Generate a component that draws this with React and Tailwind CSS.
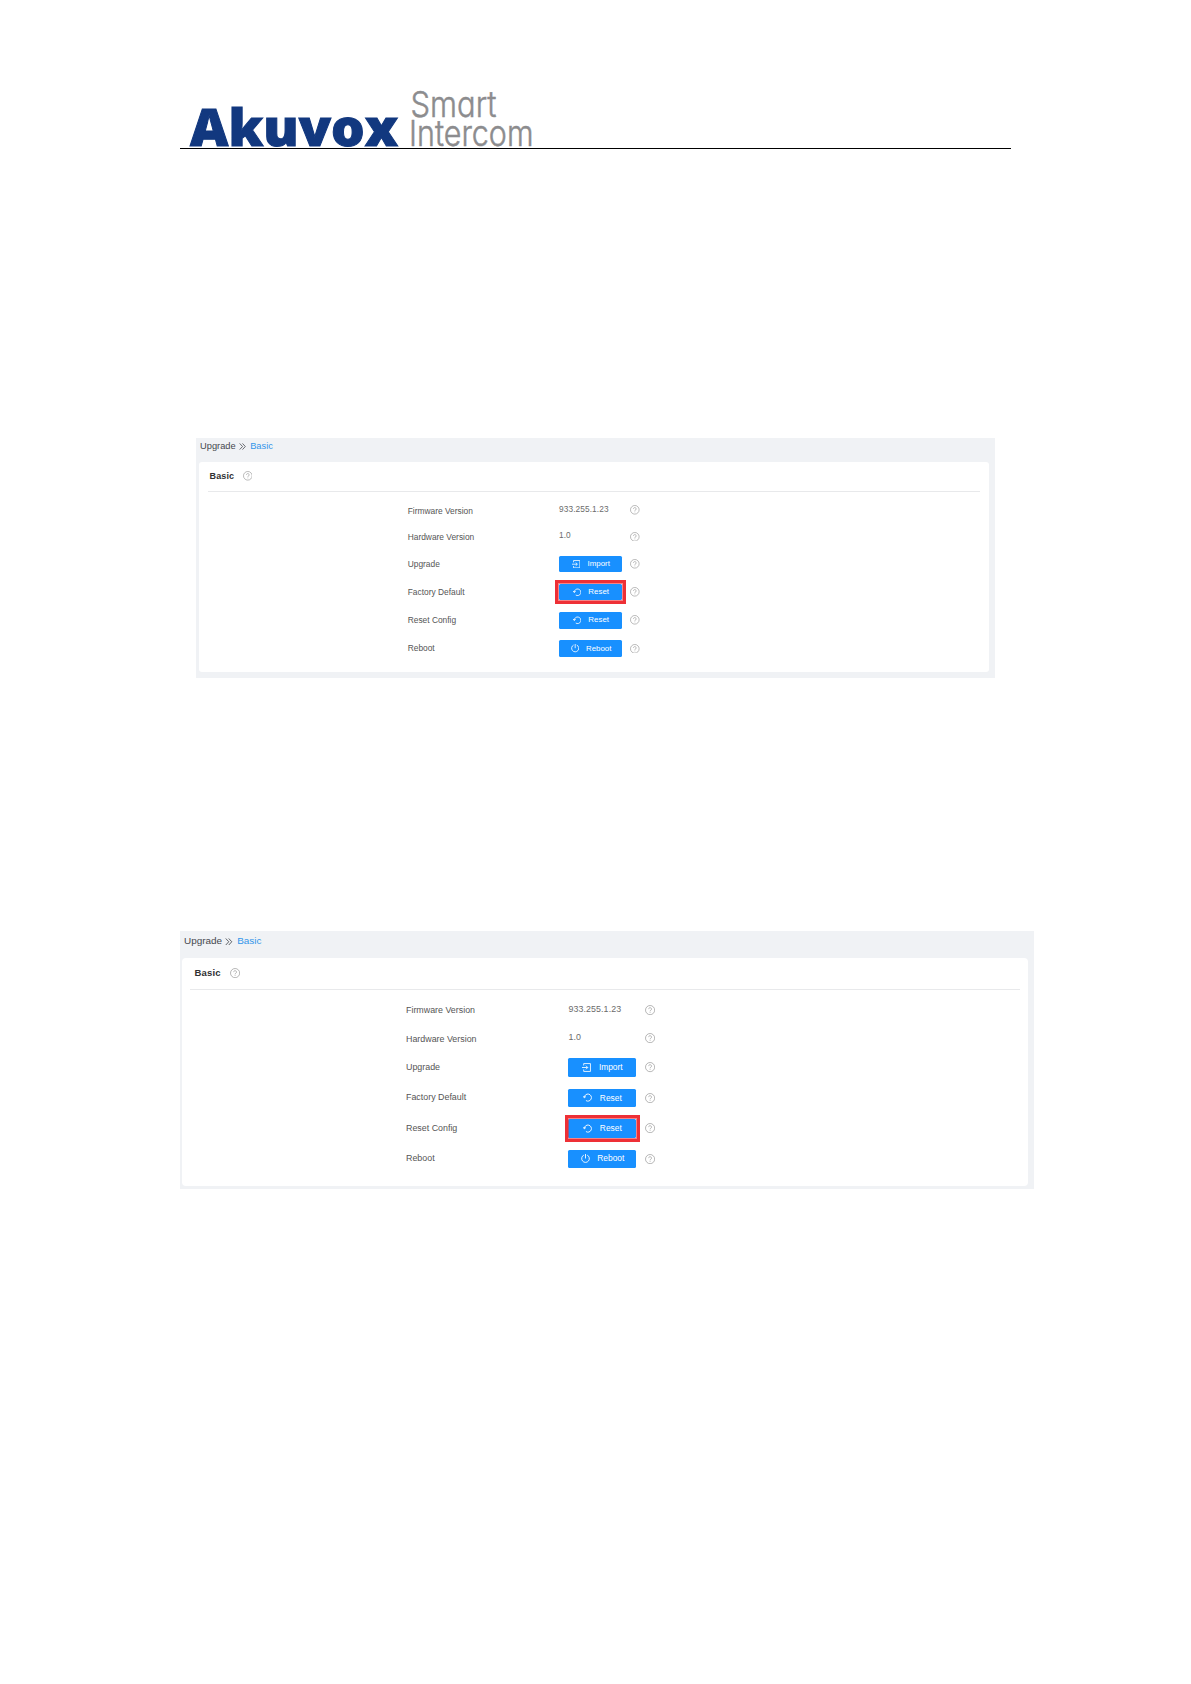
const VALUES = { firmware: "933.255.1.23", hardware: "1.0" };

const ROWS = [
    { id: "firmware", label: "Firmware Version" },
    { id: "hardware", label: "Hardware Version" },
    { id: "upgrade", label: "Upgrade", action: "Import", icon: ImportIcon },
    { id: "factory", label: "Factory Default", action: "Reset", icon: ResetIcon },
    { id: "config", label: "Reset Config", action: "Reset", icon: ResetIcon },
    { id: "reboot", label: "Reboot", action: "Reboot", icon: RebootIcon },
];

const SMALL = {
    panel: "ml-[196px] w-[799px] h-[239.5px]",
    crumbs: "h-6 pl-[4px] pb-[7px] text-[9.3px]",
    chevrons: "ml-[3px] mr-[4.5px] h-[7px] w-[7px]",
    card: "ml-[2.5px] w-[790.5px] h-[210px] rounded-[3px]",
    head: "ml-[9px] mr-[9px] h-[29.5px] pl-[2px] text-[9px] tracking-[0.15px]",
    headHelp: "ml-[8.5px]",
    rows: "pt-[5.5px] pl-[209.2px]",
    textRow: "h-[26.4px]",
    actionRow: "h-[28.2px]",
    label: "w-[151.3px] text-[8.4px]",
    textLabel: "pt-[2px]",
    field: "w-[71.3px]",
    value: "text-[8.3px] tracking-[0.1px] -mt-[2px]",
    button: "h-[16.6px] w-[63px] pl-[1px] text-[7.9px]",
    buttonIcon: "h-[8.4px] w-[8.4px] mr-[7px]",
    help: "h-[9.6px] w-[9.6px]",
    mark: "-left-[4px] -top-[3.6px] h-[23.6px] w-[71.4px]",
};

const LARGE = {
    panel: "ml-[180px] w-[854px] h-[257.5px]",
    crumbs: "h-[26.5px] pl-[4px] pb-[6px] text-[9.95px]",
    chevrons: "ml-[3px] mr-[4.5px] h-[7.5px] w-[7.5px]",
    card: "ml-[2px] w-[846px] h-[228px] rounded-[4px]",
    head: "ml-[8px] mr-[8px] h-[32.5px] pl-[4.5px] text-[9.5px] tracking-[0.15px]",
    headHelp: "ml-[9px]",
    rows: "pt-[6px] pl-[224px]",
    textRow: "h-[28.2px]",
    actionRow: "h-[30.4px]",
    label: "w-[162.4px] text-[8.9px]",
    textLabel: "pt-[2px]",
    field: "w-[76.2px]",
    value: "text-[8.85px] tracking-[0.1px] -mt-[1.5px]",
    button: "h-[18.4px] w-[67.3px] pl-[1px] text-[8.4px]",
    buttonIcon: "h-[9px] w-[9px] mr-[7.5px]",
    help: "h-[10.2px] w-[10.2px]",
    mark: "-left-[3.8px] -top-[4.4px] h-[27.4px] w-[75.4px]",
};

export default function App() {
    return (
        <div className="flex min-h-[1684px] w-full flex-col bg-white font-['Liberation_Sans',Arial,sans-serif]">
            <Header />
            <div className="pt-[289px]">
                <UpgradePanel size={SMALL} marked="factory" />
            </div>
            <div className="pt-[253.5px]">
                <UpgradePanel size={LARGE} marked="config" />
            </div>
        </div>
    );
}

function Header() {
    return (
        <header className="ml-[180px] flex h-[149px] w-[831px] items-end border-b border-black">
            <svg className="h-[80px] w-[370px] overflow-visible" viewBox="0 0 370 80">
                <text
                    x="10" y="78" fontSize="51" fontWeight="800" textLength="208" lengthAdjust="spacingAndGlyphs"
                    fill="#12387f" stroke="#12387f" strokeWidth="1" className="font-['Open_Sans',sans-serif]"
                >
                    Akuvox
                </text>
                <g
                    fill="#8c8c8e" stroke="#8c8c8e" strokeWidth="0.5" fontWeight="300"
                    className="font-['Inter',sans-serif] [font-feature-settings:'cv11'_1]"
                >
                    <text x="230.5" y="49" fontSize="36" textLength="86" lengthAdjust="spacingAndGlyphs">Smart</text>
                    <text x="229" y="78" fontSize="36" textLength="124.5" lengthAdjust="spacingAndGlyphs">Intercom</text>
                </g>
            </svg>
        </header>
    );
}

function UpgradePanel({ size, marked }) {
    return (
        <section className={`bg-[#f0f2f5] ${size.panel}`}>
            <nav className={`flex items-center text-[#45484e] ${size.crumbs}`}>
                <span>Upgrade</span>
                <svg className={size.chevrons} viewBox="0 0 8 8" fill="none" stroke="currentColor" strokeWidth="0.9">
                    <path d="M0.8 0.5 4 4 0.8 7.5M4 0.5 7.2 4 4 7.5" />
                </svg>
                <span className="text-[#3295ea]">Basic</span>
            </nav>
            <div className={`bg-white ${size.card}`}>
                <div className={`flex items-center border-b border-[#e8e9eb] font-bold text-[#303133] ${size.head}`}>
                    <span>Basic</span>
                    <span className={size.headHelp}>
                        <HelpIcon className={size.help} />
                    </span>
                </div>
                <div className={size.rows}>
                    {ROWS.map((row) => (
                        <div key={row.id} className={`flex items-center ${row.action ? size.actionRow : size.textRow}`}>
                            <span className={`whitespace-nowrap text-[#555] ${size.label} ${row.action ? "" : size.textLabel}`}>
                                {row.label}
                            </span>
                            <div className={size.field}>
                                {row.action ? (
                                    <ActionButton row={row} size={size} marked={marked === row.id} />
                                ) : (
                                    <div className={`text-[#6b6b6b] ${size.value}`}>{VALUES[row.id]}</div>
                                )}
                            </div>
                            <HelpIcon className={size.help} />
                        </div>
                    ))}
                </div>
            </div>
        </section>
    );
}

function ActionButton({ row, size, marked }) {
    const Icon = row.icon;
    return (
        <div className="relative">
            <button className={`flex items-center justify-center rounded-[1.5px] bg-[#1890ff] text-white ${size.button}`}>
                <Icon className={size.buttonIcon} />
                <span>{row.action}</span>
            </button>
            {marked && (
                <span className={`absolute border-[3.5px] border-[#ee3036] outline outline-1 outline-[#ee3036]/60 -outline-offset-[4px] ${size.mark}`} />
            )}
        </div>
    );
}

function HelpIcon({ className }) {
    return (
        <svg className={className} viewBox="0 0 20 20" fill="none" stroke="#999" strokeWidth="1.4">
            <circle cx="10" cy="10" r="9" />
            <path d="M7.2 8a2.8 2.6 0 1 1 4.4 2.1c-1 .7-1.6 1.1-1.6 2.3M10 13.7v1.5" />
        </svg>
    );
}

function ImportIcon({ className }) {
    return (
        <svg className={className} viewBox="0 0 16 16" fill="none" stroke="currentColor" strokeWidth="1.5">
            <path d="M3 4.5V1h12v14H3v-3.5M0 8h10M7 4.8 10.2 8 7 11.2" />
        </svg>
    );
}

function ResetIcon({ className }) {
    return (
        <svg className={className} viewBox="0 0 16 16" fill="none" stroke="currentColor" strokeWidth="1.6">
            <path d="M2.4 8A6.3 6.3 0 1 1 5.2 13.4M0 5.6l2.4 3L5.2 6.2" />
        </svg>
    );
}

function RebootIcon({ className }) {
    return (
        <svg className={className} viewBox="0 0 16 16" fill="none" stroke="currentColor" strokeWidth="1.6">
            <path d="M5 2A6.8 6.8 0 1 0 11 2M8 0v8" />
        </svg>
    );
}
